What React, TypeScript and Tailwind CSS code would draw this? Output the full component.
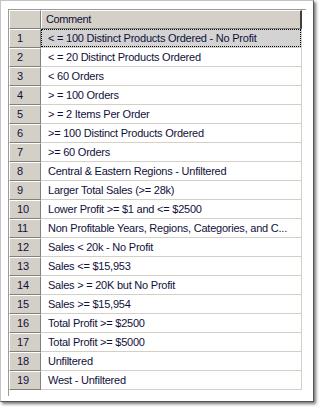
import React from "react";

const rows = [
  "< = 100 Distinct Products Ordered - No Profit",
  "< = 20 Distinct Products Ordered",
  "< 60 Orders",
  "> = 100 Orders",
  "> = 2 Items Per Order",
  ">= 100 Distinct Products Ordered",
  ">= 60 Orders",
  "Central & Eastern Regions - Unfiltered",
  "Larger Total Sales (>= 28k)",
  "Lower Profit >= $1 and <= $2500",
  "Non Profitable Years, Regions, Categories, and C...",
  "Sales < 20k - No Profit",
  "Sales <= $15,953",
  "Sales > = 20K but No Profit",
  "Sales >= $15,954",
  "Total Profit >= $2500",
  "Total Profit >= $5000",
  "Unfiltered",
  "West - Unfiltered",
];

export default function App() {
  return (
    <div className="w-[320px] h-[407px] bg-white font-['Liberation_Sans',Arial,sans-serif] text-[11px] tracking-[-0.23px] text-[#10103a] overflow-hidden">
      <div className="w-[314px] h-[402px] bg-white border border-[#c4c4c4] border-r-[#555] border-b-[#555] shadow-[2px_2px_3px_rgba(0,0,0,0.55)] pl-[7px] pt-[8px]">
        <div className="w-[298px] h-[387px] border-l border-t border-[#9a9a9a] flex flex-col">
          {/* header */}
          <div className="flex h-[19px]">
            <div className="w-[32px] h-[19px] bg-[#d4d0c8] border-t border-l border-white border-r border-b border-r-[#808080] border-b-[#808080]" />
            <div className="w-[261px] h-[19px] bg-[#d4d0c8] border-t border-l border-white border-r-2 border-b border-r-[#404040] border-b-[#808080] pl-[4px] flex items-center leading-none tracking-[-0.4px]">
              Comment
            </div>
          </div>
          {rows.map((r, i) => (
            <div key={i} className="flex h-[19px]">
              <div className="w-[32px] h-[19px] bg-[#d4d0c8] border-t border-l border-white border-r border-b border-r-[#808080] border-b-[#808080] pl-[7px] flex items-center leading-none">
                {i + 1}
              </div>
              <div className="w-[261px] h-[19px] border-r border-b border-[#d4d0c8]">
                {i === 0 ? (
                  <div className="h-full bg-[#d3d3d3] border border-dotted border-black pl-[6px] flex items-center whitespace-nowrap overflow-hidden leading-none">
                    {r}
                  </div>
                ) : (
                  <div className="h-full pl-[7px] flex items-center whitespace-nowrap overflow-hidden leading-none">
                    {r}
                  </div>
                )}
              </div>
            </div>
          ))}
        </div>
      </div>
    </div>
  );
}
